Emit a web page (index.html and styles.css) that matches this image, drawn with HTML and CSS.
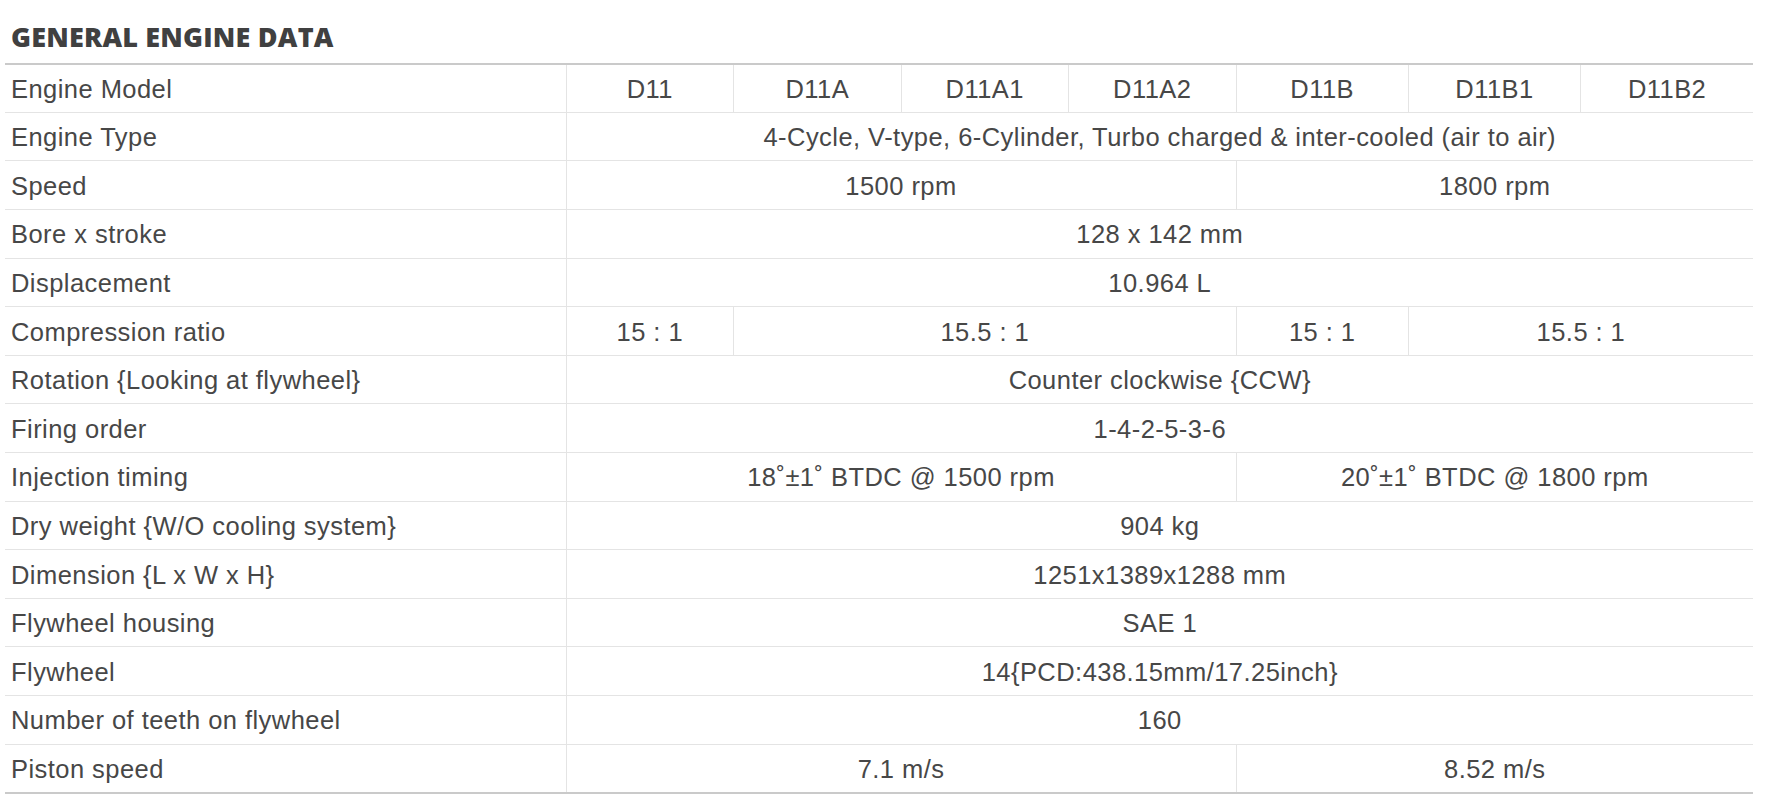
FILE: index.html
```html
<!DOCTYPE html>
<html>
<head>
<meta charset="utf-8">
<link rel="stylesheet" href="styles.css">
</head>
<body>
<div class="wrap">
  <h2 class="title">GENERAL ENGINE DATA</h2>
  <table class="spec">
    <colgroup>
      <col class="c-label">
      <col class="c-a"><col class="c-a"><col class="c-a"><col class="c-a">
      <col class="c-b"><col class="c-b"><col class="c-b">
    </colgroup>
    <tbody>
      <tr><td>Engine Model</td><td>D11</td><td>D11A</td><td>D11A1</td><td>D11A2</td><td>D11B</td><td>D11B1</td><td>D11B2</td></tr>
      <tr><td>Engine Type</td><td colspan="7">4-Cycle, V-type, 6-Cylinder, Turbo charged &amp; inter-cooled (air to air)</td></tr>
      <tr><td>Speed</td><td colspan="4">1500 rpm</td><td colspan="3">1800 rpm</td></tr>
      <tr><td>Bore x stroke</td><td colspan="7">128 x 142 mm</td></tr>
      <tr><td>Displacement</td><td colspan="7">10.964 L</td></tr>
      <tr><td>Compression ratio</td><td>15 : 1</td><td colspan="3">15.5 : 1</td><td>15 : 1</td><td colspan="2">15.5 : 1</td></tr>
      <tr><td>Rotation {Looking at flywheel}</td><td colspan="7">Counter clockwise {CCW}</td></tr>
      <tr><td>Firing order</td><td colspan="7">1-4-2-5-3-6</td></tr>
      <tr><td>Injection timing</td><td colspan="4">18˚±1˚ BTDC @ 1500 rpm</td><td colspan="3">20˚±1˚ BTDC @ 1800 rpm</td></tr>
      <tr><td>Dry weight {W/O cooling system}</td><td colspan="7">904 kg</td></tr>
      <tr><td>Dimension {L x W x H}</td><td colspan="7">1251x1389x1288 mm</td></tr>
      <tr><td>Flywheel housing</td><td colspan="7">SAE 1</td></tr>
      <tr><td>Flywheel</td><td colspan="7">14{PCD:438.15mm/17.25inch}</td></tr>
      <tr><td>Number of teeth on flywheel</td><td colspan="7">160</td></tr>
      <tr><td>Piston speed</td><td colspan="4">7.1 m/s</td><td colspan="3">8.52 m/s</td></tr>
    </tbody>
  </table>
</div>
</body>
</html>
```

FILE: styles.css
```css
html, body {
  margin: 0;
  padding: 0;
  background: #ffffff;
}

.wrap {
  padding-left: 5px;
  width: 1748px;
}

.title {
  margin: 0;
  padding: 21px 0 0 6px;
  height: 42px;
  font-family: "Open Sans", "Noto Sans", sans-serif;
  font-weight: 800;
  font-size: 27px;
  line-height: 32px;
  letter-spacing: 0.2px;
  color: #404040;
  border-bottom: 2px solid #cacaca;
}

.spec {
  width: 1748px;
  table-layout: fixed;
  border-collapse: collapse;
  font-family: "Liberation Sans", Arial, sans-serif;
  font-size: 25.5px;
  color: #474747;
  border-bottom: 2px solid #cacaca;
}

.c-label { width: 561px; }
.c-a { width: 167.5px; }
.c-b { width: 172.3px; }

.spec tr {
  height: 48.6px;
}

.spec tr.first,
.spec tr:first-child {
  height: 47.4px;
}

.spec td {
  padding: 2px 0 0;
  text-align: center;
  vertical-align: middle;
  border-top: 1px solid #e4e4e4;
  border-left: 1px solid #e4e4e4;
  white-space: nowrap;
  letter-spacing: 0.45px;
}

.spec tr:first-child td {
  border-top: none;
}

.spec td:first-child {
  text-align: left;
  padding-left: 6px;
  border-left: none;
}
```
